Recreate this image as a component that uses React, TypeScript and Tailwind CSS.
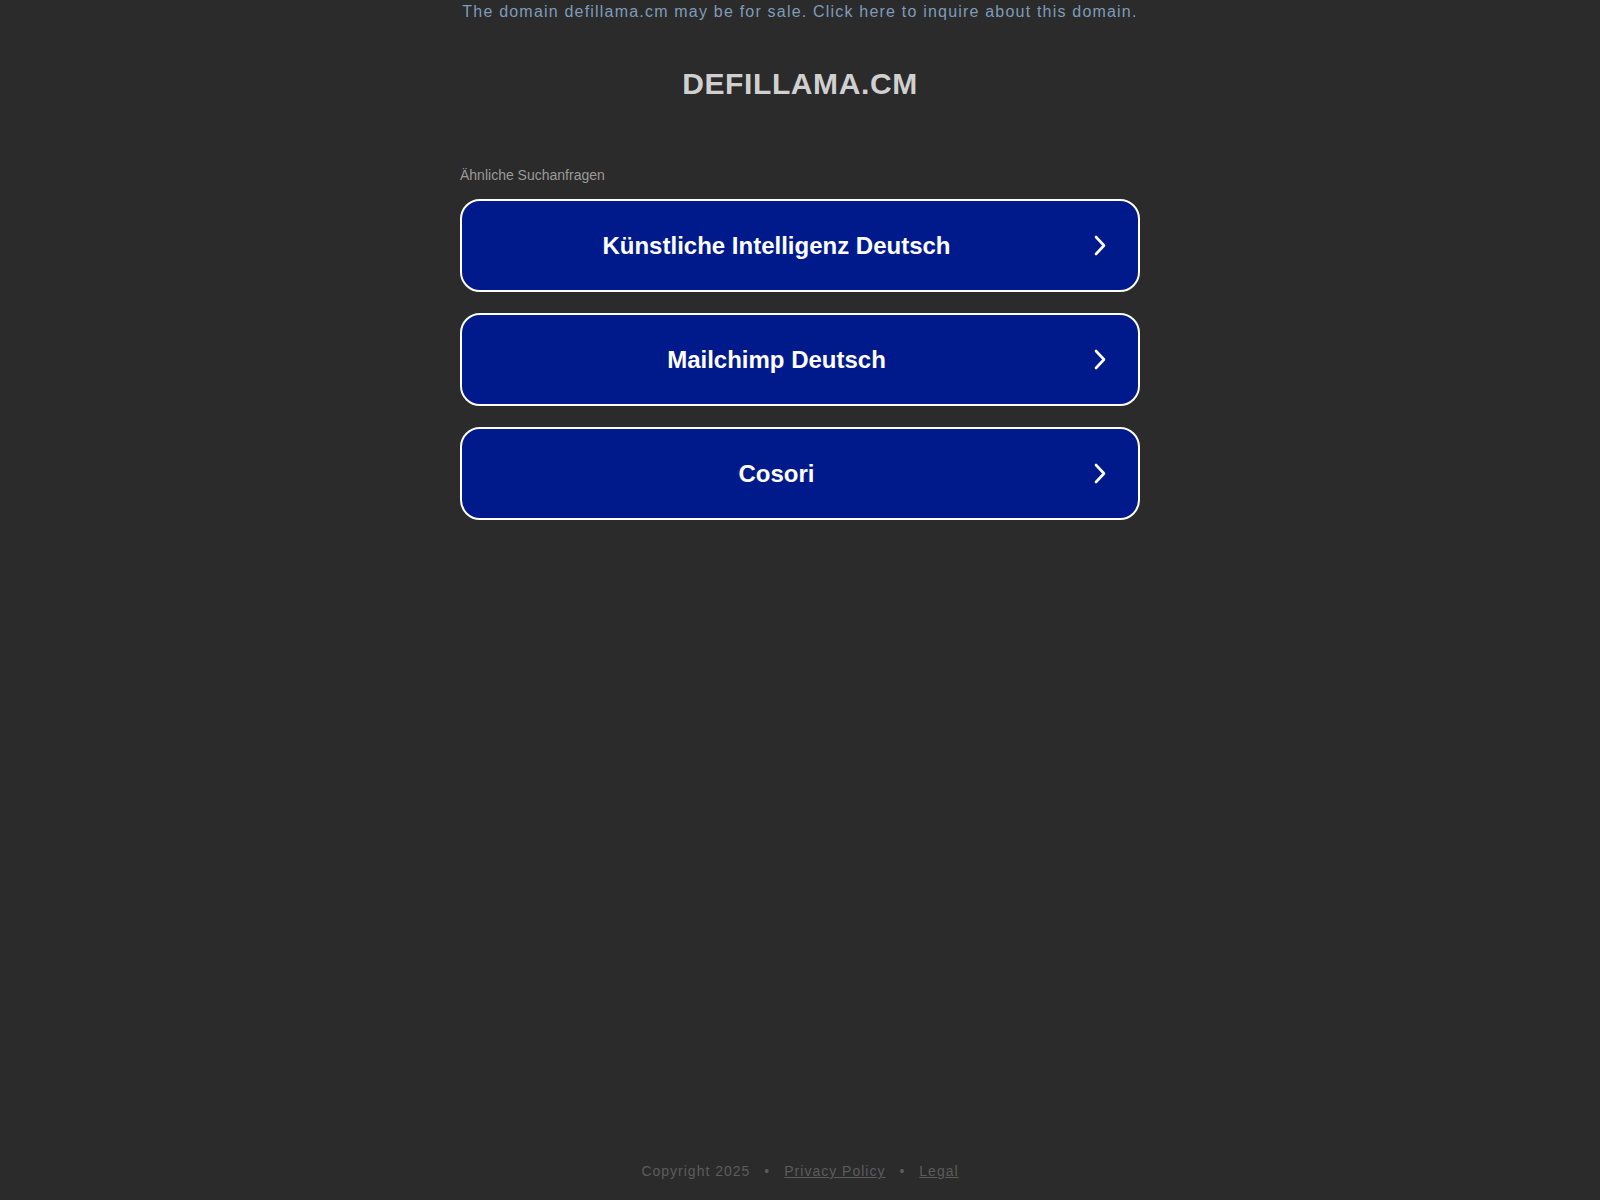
import React from 'react';

const searches = ['Künstliche Intelligenz Deutsch', 'Mailchimp Deutsch', 'Cosori'];

const Chevron = () => (
  <svg width="12" height="21" viewBox="0 0 12 21" fill="none" className="shrink-0">
    <path d="M2 2l8 8.5L2 19" stroke="white" strokeWidth="2.6" strokeLinecap="round" strokeLinejoin="round" />
  </svg>
);

const SearchButton: React.FC<{ label: string }> = ({ label }) => (
  <a
    href="#"
    className="flex h-[93px] items-center gap-[3px] rounded-[20px] border-2 border-white bg-[#001a8c] pr-[32px] text-white"
  >
    <span className="flex-1 text-center text-[24px] font-bold leading-[30px]">{label}</span>
    <Chevron />
  </a>
);

export default function App() {
  return (
    <div
      className="flex min-h-screen flex-col bg-[#2b2b2b]"
      style={{ fontFamily: '"Liberation Sans", Arial, sans-serif' }}
    >
      <div className="pt-[1px] text-center text-[16px] leading-[22px] tracking-[1.2px] text-[#7f9bb9]">
        The domain defillama.cm may be for sale. Click here to inquire about this domain.
      </div>

      <h1 className="mt-[43px] text-center text-[30px] font-bold leading-[36px] tracking-[0.6px] text-[#d0d0d0]">
        DEFILLAMA.CM
      </h1>

      <div className="mx-auto mt-[65px] w-[680px]">
        <div className="text-[14px] leading-[17px] text-[#9a9a9a]">Ähnliche Suchanfragen</div>
        <div className="mt-[15px] flex flex-col gap-[21px]">
          {searches.map(s => (
            <SearchButton key={s} label={s} />
          ))}
        </div>
      </div>

      <div className="mt-auto pb-[19px] text-center text-[14px] leading-[20px] tracking-[1px] text-[#5c5c5c]">
        Copyright 2025
        <span className="mx-[14px]">•</span>
        <a href="#" className="underline">Privacy Policy</a>
        <span className="mx-[14px]">•</span>
        <a href="#" className="underline">Legal</a>
      </div>
    </div>
  );
}
